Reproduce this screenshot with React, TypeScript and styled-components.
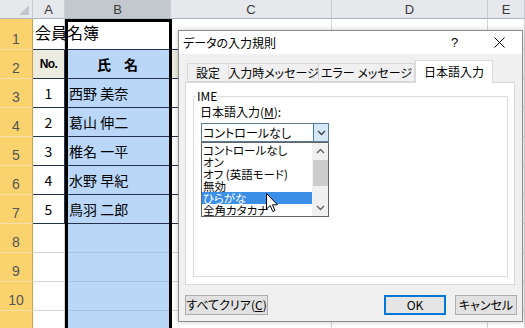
import React from 'react';
import styled, { createGlobalStyle } from 'styled-components';

const GlobalStyle = createGlobalStyle`
  html, body {
    margin: 0;
    padding: 0;
    background: #ffffff;
  }
  body {
    width: 525px;
    height: 328px;
    overflow: hidden;
    font-family: "Noto Sans CJK JP", "Noto Sans", sans-serif;
  }
`;

const Screen = styled.div`
  position: relative;
  width: 525px;
  height: 328px;
  overflow: hidden;
`;

/* ---------- spreadsheet ---------- */

const Sheet = styled.div`
  display: grid;
  grid-template-columns: 33px 32px 106px 161px 156px 37px;
  grid-template-rows: 19px 31px repeat(10, 29px);
  font-family: "Noto Sans CJK JP", sans-serif;
`;

const Corner = styled.div`
  box-sizing: border-box;
  background: #e6e8eb;
  border-right: 1px solid #c8cdd3;
  border-bottom: 1px solid #abb3bc;
  display: flex;
  align-items: flex-end;
  justify-content: flex-end;
  padding: 0 3px 3px 0;
`;

const CornerMark = styled.div`
  width: 0;
  height: 0;
  border-left: 10px solid transparent;
  border-bottom: 10px solid #c3c8ce;
`;

const ColHeader = styled.div<{ $selected?: boolean }>`
  box-sizing: border-box;
  background: ${p => (p.$selected ? '#c3c8cf' : '#e6e8eb')};
  border-right: 1px solid #c8cdd3;
  border-bottom: 1px solid #abb3bc;
  display: flex;
  align-items: center;
  justify-content: center;
  font-family: "Liberation Sans", sans-serif;
  font-size: 13px;
  color: #3a3a3a;
`;

const RowHeader = styled.div`
  box-sizing: border-box;
  background: #fad36f;
  border-right: 1px solid #c9a04c;
  border-bottom: 1px solid #f3e0ad;
  display: flex;
  align-items: flex-end;
  justify-content: center;
  padding-bottom: 2px;
  font-family: "Liberation Sans", sans-serif;
  font-size: 14px;
  color: #555555;
`;

interface CellProps {
  $fill?: string;
  $hline?: string;
  $vline?: string;
  $center?: boolean;
  $bold?: boolean;
  $size?: number;
  $bottom?: boolean;
}

const Cell = styled.div<CellProps>`
  box-sizing: border-box;
  display: flex;
  align-items: ${p => (p.$bottom ? 'flex-end' : 'center')};
  justify-content: ${p => (p.$center ? 'center' : 'flex-start')};
  padding: ${p => (p.$bottom ? '0 2px 5px 2px' : '0 4px')};
  background: ${p => p.$fill || 'transparent'};
  border-right: 1px solid ${p => p.$vline || '#d4d4d4'};
  border-bottom: 1px solid ${p => p.$hline || '#d4d4d4'};
  font-size: ${p => p.$size || 14}px;
  font-weight: ${p => (p.$bold ? 700 : 400)};
  white-space: nowrap;
  overflow: visible;
  color: #000000;
`;

const NoLabel = styled.span`
  font-family: "Liberation Sans", sans-serif;
  font-size: 12px;
  font-weight: 700;
  letter-spacing: -0.6px;
`;

const HeadName = styled.span`
  letter-spacing: 13px;
  margin-right: -13px;
`;

const Selection = styled.div`
  position: absolute;
  left: 65px;
  top: 19px;
  width: 107px;
  height: 330px;
  box-sizing: border-box;
  border: 3px solid #000000;
  border-bottom: none;
  pointer-events: none;
`;

/* ---------- dialog ---------- */

const Dialog = styled.div`
  position: absolute;
  left: 178px;
  top: 30px;
  width: 345px;
  height: 292px;
  box-sizing: border-box;
  border: 1px solid #8e8e8e;
  background: #f0f0f0;
  box-shadow: 0 0 5px rgba(0, 0, 0, 0.22);
  display: flex;
  flex-direction: column;
  font-family: "Noto Sans CJK JP", sans-serif;
  font-feature-settings: "palt";
  font-size: 12px;
  color: #000000;
`;

const TitleBar = styled.div`
  height: 23px;
  background: #ffffff;
  display: flex;
  align-items: center;
  padding-left: 4px;
`;

const TitleText = styled.div`
  flex: 1;
  line-height: 14px;
`;

const TitleButton = styled.div`
  width: 45px;
  height: 23px;
  display: flex;
  align-items: center;
  justify-content: center;
  font-family: "Liberation Sans", sans-serif;
  font-size: 13px;
`;

const Body = styled.div`
  flex: 1;
  display: flex;
  flex-direction: column;
  padding: 6px 5px 0 6px;
`;

const TabRow = styled.div`
  height: 22px;
  display: flex;
  align-items: flex-end;
  padding-left: 2px;
  margin-right: 2px;
  position: relative;
  z-index: 1;
`;

const Tab = styled.div<{ $active?: boolean; $w: number }>`
  box-sizing: border-box;
  width: ${p => p.$w}px;
  height: ${p => (p.$active ? 23 : 19)}px;
  margin-bottom: ${p => (p.$active ? -1 : 0)}px;
  background: ${p => (p.$active ? '#ffffff' : '#f0f0f0')};
  border: 1px solid #d9d9d9;
  border-bottom: ${p => (p.$active ? 'none' : '1px solid #d9d9d9')};
  border-left: ${p => (p.$active ? '1px solid #d9d9d9' : 'none')};
  display: flex;
  align-items: center;
  justify-content: center;
  line-height: 14px;
  padding-top: ${p => (p.$active ? 0 : 1)}px;
  white-space: nowrap;

  &:first-child {
    border-left: 1px solid #d9d9d9;
  }
`;

const Panel = styled.div`
  height: 203px;
  box-sizing: border-box;
  margin-right: 2px;
  background: #ffffff;
  border: 1px solid #d9d9d9;
  display: flex;
  flex-direction: column;
`;

const Group = styled.fieldset`
  box-sizing: border-box;
  height: 188px;
  margin: 6px 6px 0 7px;
  padding: 0;
  border: 1px solid #dcdcdc;
  min-width: 0;
`;

const Legend = styled.legend`
  margin-left: 2px;
  padding: 0 1px;
  line-height: 14px;
  font-size: 12px;
`;

const FieldLabel = styled.div`
  margin: 2px 0 0 6px;
  line-height: 14px;
`;

const Key = styled.span`
  text-decoration: underline;
  text-underline-offset: 1px;
`;

const Combo = styled.div`
  position: relative;
  width: 128px;
  height: 19px;
  box-sizing: border-box;
  margin: 4px 0 0 7px;
  border: 1px solid #5a7a98;
  background: #ffffff;
  display: flex;
`;

const ComboText = styled.div`
  flex: 1;
  padding-left: 1px;
  line-height: 17px;
  white-space: nowrap;
`;

const ComboButton = styled.div`
  width: 15px;
  box-sizing: border-box;
  background: #d5e8f8;
  border-left: 1px solid #3c7fb1;
  display: flex;
  align-items: center;
  justify-content: center;
`;

const DropList = styled.div`
  position: absolute;
  left: -1px;
  top: 18px;
  width: 128px;
  height: 75px;
  box-sizing: border-box;
  border: 1px solid #646464;
  background: #ffffff;
  display: flex;
  z-index: 3;
`;

const Items = styled.div`
  flex: 1;
  padding-top: 1px;
`;

const ListItem = styled.div<{ $selected?: boolean }>`
  height: 12px;
  line-height: 12px;
  font-size: 11.5px;
  padding-left: 1px;
  white-space: nowrap;
  background: ${p => (p.$selected ? '#3c8fe6' : 'transparent')};
  color: ${p => (p.$selected ? '#ffffff' : '#000000')};
`;

const ScrollTrack = styled.div`
  width: 16px;
  background: #f0f0f0;
  display: flex;
  flex-direction: column;
  align-items: center;
`;

const ScrollArrow = styled.div`
  height: 16px;
  width: 16px;
  display: flex;
  align-items: center;
  justify-content: center;
`;

const ScrollThumb = styled.div`
  width: 15px;
  height: 26px;
  margin-top: 1px;
  background: #cdcdcd;
`;

const ScrollGap = styled.div`
  flex: 1;
`;

const Footer = styled.div`
  display: flex;
  align-items: center;
  margin-top: 10px;
  gap: 9px;
`;

const Spacer = styled.div`
  flex: 1;
`;

const Button = styled.div<{ $default?: boolean; $w: number }>`
  box-sizing: border-box;
  width: ${p => p.$w}px;
  height: 20px;
  background: ${p => (p.$default ? '#e5e5e5' : '#e1e1e1')};
  border: ${p => (p.$default ? '2px solid #0078d7' : '1px solid #adadad')};
  display: flex;
  align-items: center;
  justify-content: center;
  line-height: 14px;
  white-space: nowrap;
`;

const Pointer = styled.svg`
  position: absolute;
  left: 266px;
  top: 193px;
  z-index: 5;
`;

/* ---------- data ---------- */

const members = [
  { no: 1, name: '西野 美奈' },
  { no: 2, name: '葛山 伸二' },
  { no: 3, name: '椎名 一平' },
  { no: 4, name: '水野 早紀' },
  { no: 5, name: '鳥羽 二郎' },
];

const imeModes = [
  'コントロールなし',
  'オン',
  'オフ (英語モード)',
  '無効',
  'ひらがな',
  '全角カタカナ',
];

const tabs = [
  { label: '設定', w: 42 },
  { label: '入力時メッセージ', w: 90 },
  { label: 'エラー メッセージ', w: 96 },
  { label: '日本語入力', w: 78, active: true },
];

const DARK = '#24344f';
const BLUE = '#bad7f8';
const BEIGE = '#ebebdf';

function rowCells(r: number) {
  if (r === 1) {
    return [
      <Cell key="a" $bottom $size={16} $hline={DARK}>会員名簿</Cell>,
      <Cell key="b" $hline={DARK} />,
      <Cell key="c" $hline={DARK} />,
      <Cell key="d" />,
      <Cell key="e" />,
    ];
  }
  if (r === 2) {
    return [
      <Cell key="a" $center $fill={BEIGE} $hline={DARK} $vline={DARK}><NoLabel>No.</NoLabel></Cell>,
      <Cell key="b" $center $bold $fill={BLUE} $hline={DARK} $vline={DARK}><HeadName>氏名</HeadName></Cell>,
      <Cell key="c" $fill={BEIGE} $hline={DARK} $vline={DARK} />,
      <Cell key="d" />,
      <Cell key="e" />,
    ];
  }
  const m = members[r - 3];
  if (m) {
    return [
      <Cell key="a" $center $hline={DARK} $vline={DARK}>{m.no}</Cell>,
      <Cell key="b" $fill={BLUE} $hline={DARK} $vline={DARK}>{m.name}</Cell>,
      <Cell key="c" $hline={DARK} $vline={DARK} />,
      <Cell key="d" />,
      <Cell key="e" />,
    ];
  }
  return [
    <Cell key="a" />,
    <Cell key="b" $fill={BLUE} $hline="#a4c2e4" $vline="#a4c2e4" />,
    <Cell key="c" />,
    <Cell key="d" />,
    <Cell key="e" />,
  ];
}

function Chevron({ up, color = '#404040' }: { up?: boolean; color?: string }) {
  return (
    <svg width="9" height="6" viewBox="0 0 9 6">
      <polyline
        points={up ? '1,5 4.5,1.5 8,5' : '1,1 4.5,4.5 8,1'}
        fill="none"
        stroke={color}
        strokeWidth="1.3"
      />
    </svg>
  );
}

export default function App() {
  return (
    <>
      <GlobalStyle />
      <Screen>
        <Sheet>
          <Corner><CornerMark /></Corner>
          {['A', 'B', 'C', 'D', 'E'].map(l => (
            <ColHeader key={l} $selected={l === 'B'}>{l}</ColHeader>
          ))}
          {Array.from({ length: 10 }, (_, i) => (
            <React.Fragment key={i}>
              <RowHeader>{i + 1}</RowHeader>
              {rowCells(i + 1)}
            </React.Fragment>
          ))}
          <RowHeader />
          {rowCells(11)}
        </Sheet>
        <Selection />

        <Dialog>
          <TitleBar>
            <TitleText>データの入力規則</TitleText>
            <TitleButton>?</TitleButton>
            <TitleButton>
              <svg width="11" height="11" viewBox="0 0 11 11">
                <path d="M0.5 0.5 L10.5 10.5 M10.5 0.5 L0.5 10.5" stroke="#000" strokeWidth="1" />
              </svg>
            </TitleButton>
          </TitleBar>
          <Body>
            <TabRow>
              {tabs.map(t => (
                <Tab key={t.label} $w={t.w} $active={t.active}>{t.label}</Tab>
              ))}
            </TabRow>
            <Panel>
              <Group>
                <Legend>IME</Legend>
                <FieldLabel>日本語入力(<Key>M</Key>):</FieldLabel>
                <Combo>
                  <ComboText>コントロールなし</ComboText>
                  <ComboButton><Chevron /></ComboButton>
                  <DropList>
                    <Items>
                      {imeModes.map(mode => (
                        <ListItem key={mode} $selected={mode === 'ひらがな'}>{mode}</ListItem>
                      ))}
                    </Items>
                    <ScrollTrack>
                      <ScrollArrow><Chevron up color="#606060" /></ScrollArrow>
                      <ScrollThumb />
                      <ScrollGap />
                      <ScrollArrow><Chevron color="#606060" /></ScrollArrow>
                    </ScrollTrack>
                  </DropList>
                </Combo>
              </Group>
            </Panel>
            <Footer>
              <Button $w={83}>すべてクリア(<Key>C</Key>)</Button>
              <Spacer />
              <Button $w={62} $default>OK</Button>
              <Button $w={62}>キャンセル</Button>
            </Footer>
          </Body>
        </Dialog>

        <Pointer width="13" height="20" viewBox="0 0 13 20">
          <path
            d="M0.5 0.5 L0.5 16 L4.2 12.6 L6.8 18.6 L9 17.6 L6.5 11.8 L11.5 11.8 Z"
            fill="#ffffff"
            stroke="#000000"
            strokeWidth="1"
            strokeLinejoin="round"
          />
        </Pointer>
      </Screen>
    </>
  );
}
